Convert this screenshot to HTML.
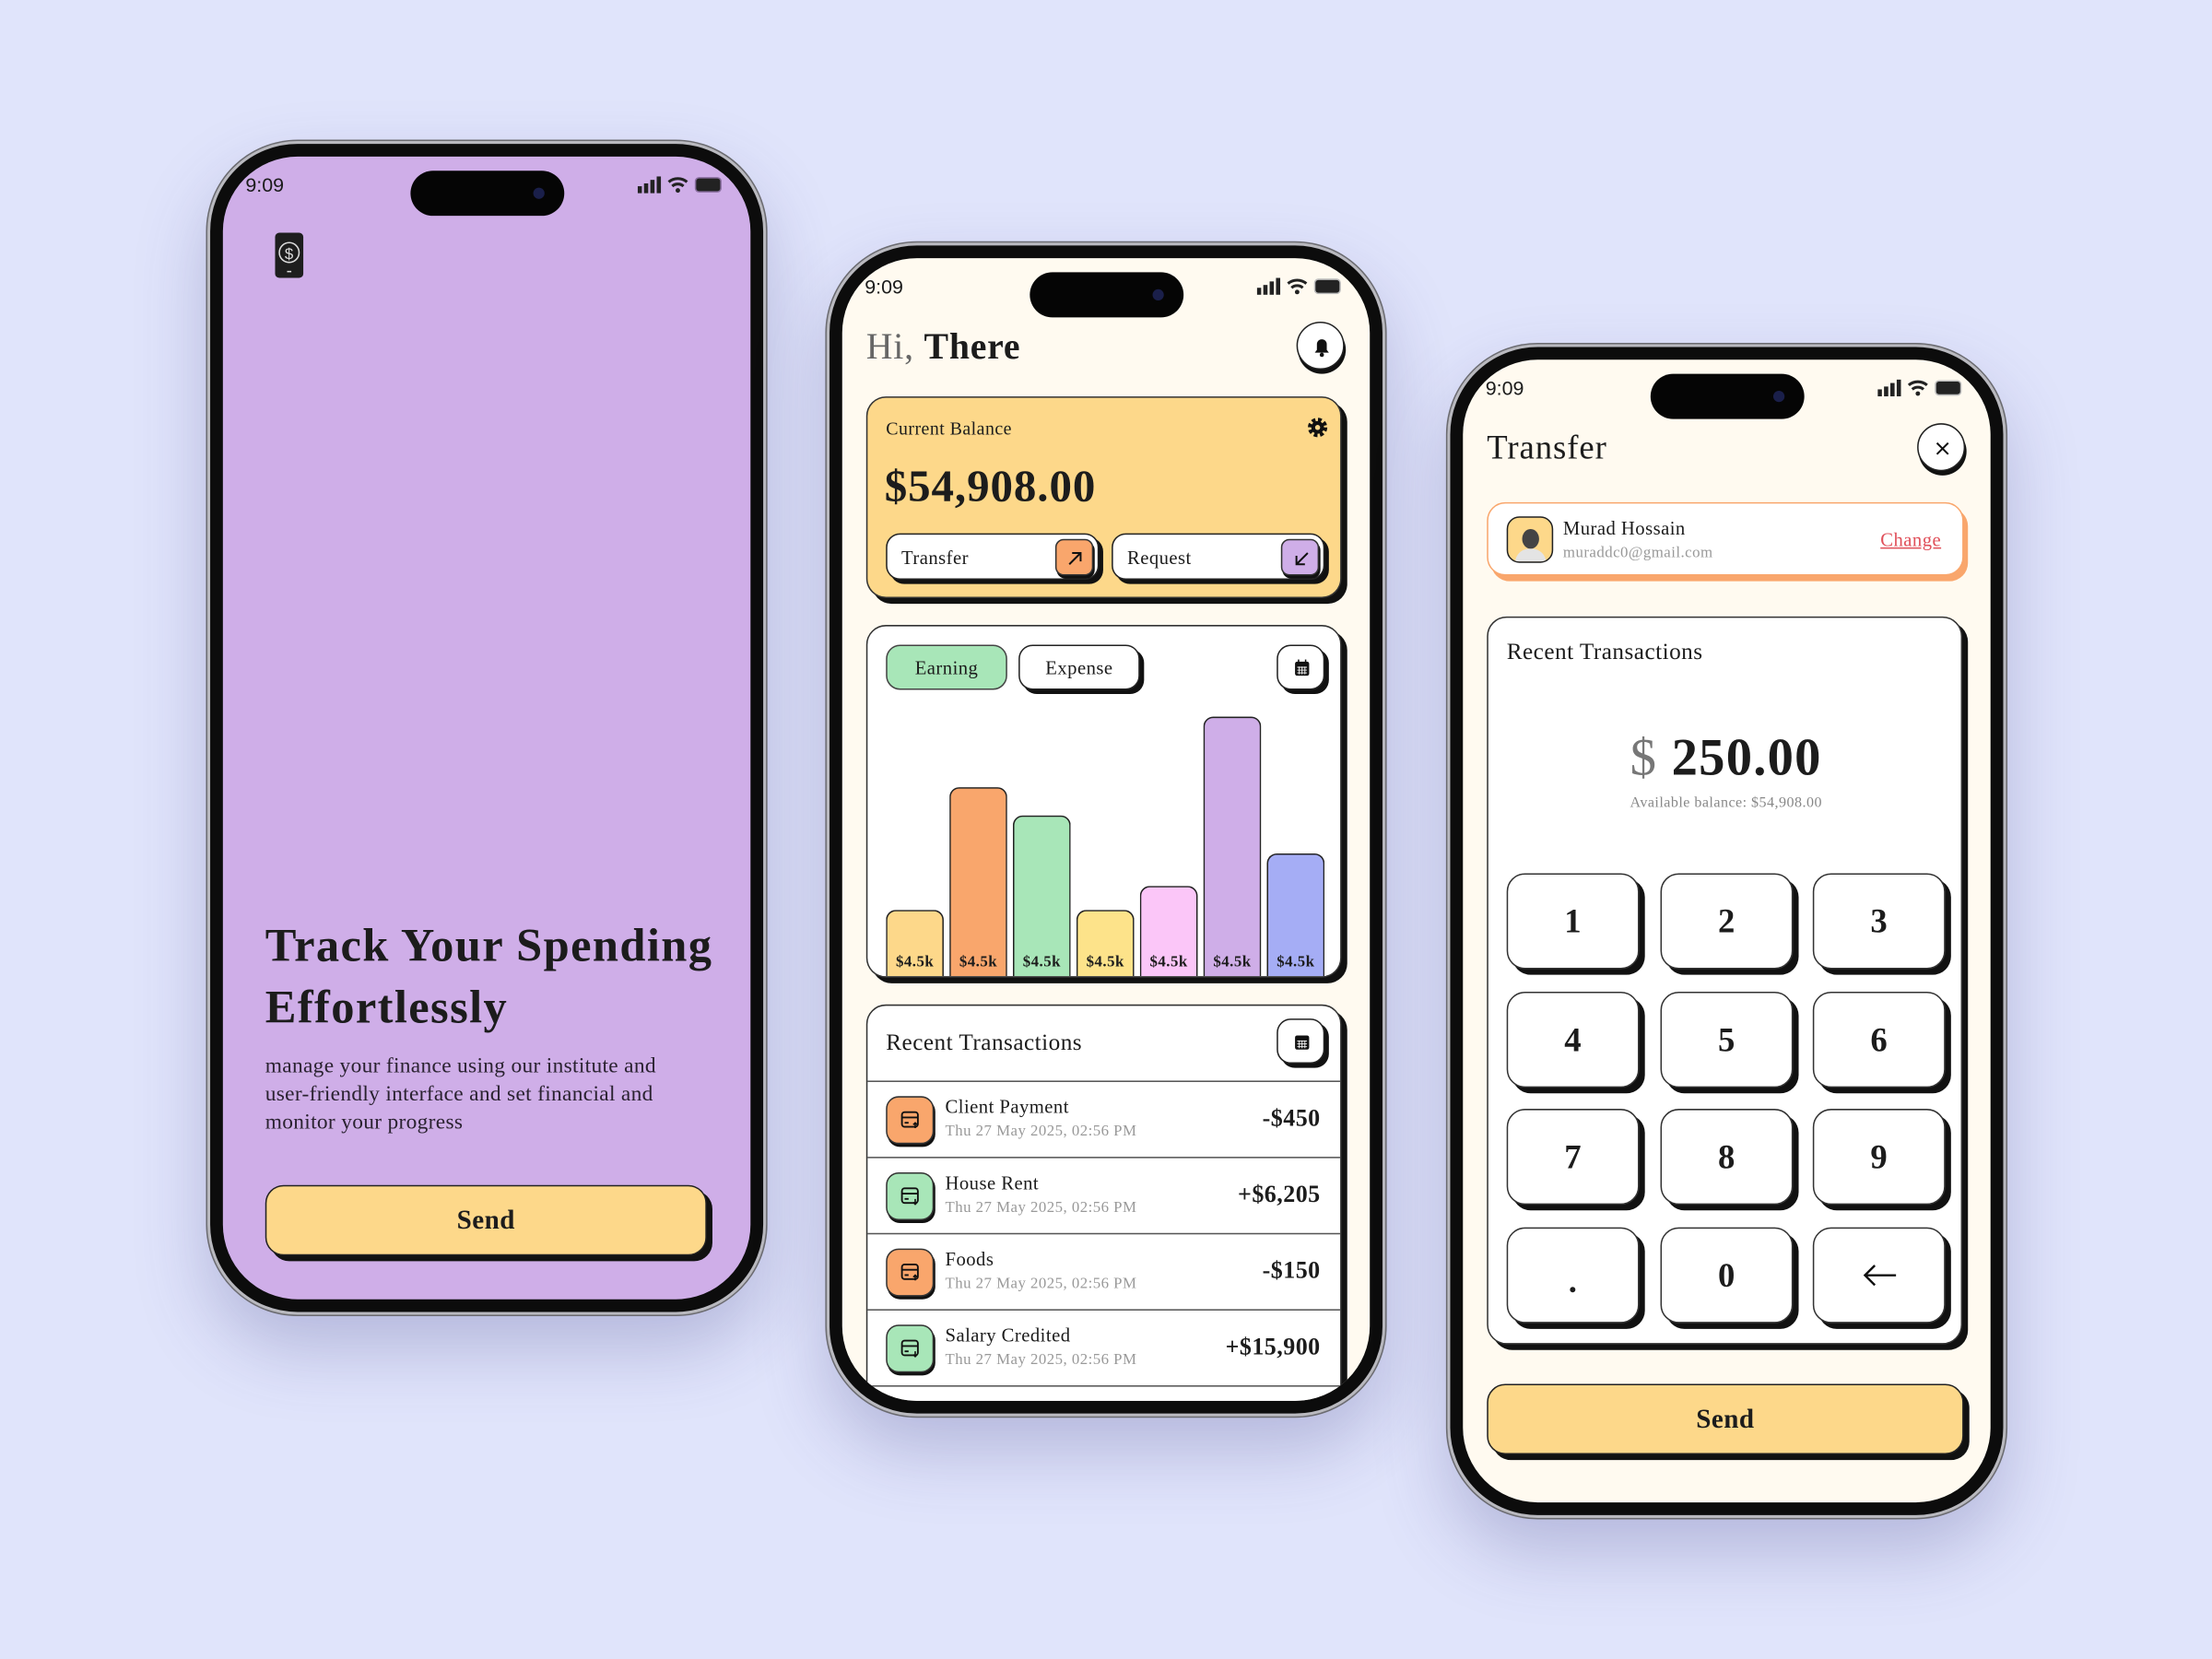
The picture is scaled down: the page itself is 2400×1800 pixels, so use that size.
<!DOCTYPE html>
<html><head><meta charset="utf-8"><style>
*{box-sizing:border-box;margin:0;padding:0}
html,body{width:2400px;height:1800px;overflow:hidden;background:#e0e4fb}
#w{position:absolute;left:0;top:0;width:1568px;height:1176px;transform:scale(1.530612);transform-origin:0 0;font-family:"Liberation Serif",serif;color:#1c1c1c;letter-spacing:.3px}
.ph{position:absolute;width:396px;height:832px;border-radius:64px;background:#0c0c0c;border:2px solid #b9b9bf;box-shadow:0 0 0 1px #6b6b70,0 24px 50px rgba(70,70,140,.28)}
.sc{position:absolute;left:9px;top:9px;width:374px;height:810px;border-radius:53px;overflow:hidden}
.a{position:absolute}
.time{position:absolute;left:16px;top:12px;font:500 14px "Liberation Sans",sans-serif;letter-spacing:0}
.isl{position:absolute;width:109px;height:32px;top:10px;left:133px;background:#050505;border-radius:16px}
.isl:after{content:"";position:absolute;right:14px;top:12px;width:8px;height:8px;border-radius:50%;background:#1a1f4a}
.st{position:absolute;right:18px;top:14px;width:62px;height:12px}
.sh{border:1px solid #222;box-shadow:3px 3px 0 #111}
.card{background:#fff;border:1px solid #333;border-radius:14px;box-shadow:4px 4px 0 #111}
.bar{position:absolute;bottom:0;width:41px;border:1.3px solid #222;border-bottom:none;border-radius:7px 7px 0 0;font-weight:bold;font-size:11px;text-align:center;padding-top:0}
.bar span{position:absolute;bottom:4px;left:0;right:0}
.row{position:absolute;left:0;right:0;height:54px;border-top:1px solid #555}
.ic{position:absolute;left:13px;top:10px;width:34px;height:34px;border-radius:9px;border:1px solid #333;box-shadow:1px 2px 0 #111}
.nm{position:absolute;left:55px;top:10px;font-size:13.5px}
.dt{position:absolute;left:55px;top:29px;font-size:11px;color:#999}
.amt{position:absolute;right:14px;top:16px;font-size:17px;font-weight:bold}
.key{position:absolute;width:94px;height:68px;background:#fff;border:1px solid #333;border-radius:13px;box-shadow:4px 4px 0 #111;font-size:24px;font-weight:bold;text-align:center;line-height:68px}
</style></head><body><div id="w">

<svg width="0" height="0" style="position:absolute"><defs>
<symbol id="cu" viewBox="0 0 34 34"><rect x="11" y="11" width="12" height="11" rx="2" fill="none" stroke="#111" stroke-width="1.3"/><path d="M11 15h12M13 19h3" stroke="#111" stroke-width="1.3"/><path d="M21 23v-4M19.5 20.5l1.5-1.5 1.5 1.5" stroke="#111" stroke-width="1.1" fill="none"/></symbol>
<symbol id="cd" viewBox="0 0 34 34"><rect x="11" y="11" width="12" height="11" rx="2" fill="none" stroke="#111" stroke-width="1.3"/><path d="M11 15h12M13 19h3" stroke="#111" stroke-width="1.3"/><path d="M21 19v4M19.5 21.5l1.5 1.5 1.5-1.5" stroke="#111" stroke-width="1.1" fill="none"/></symbol>
</defs></svg>

<!-- Phone 1 -->
<div class="ph" style="left:147px;top:100px">
<div class="sc" style="background:#cfaee8">
<div class="time">9:09</div><div class="isl"></div>
<svg class="st" viewBox="0 0 62 12"><rect x="0" y="7" width="3" height="5" fill="#222"/><rect x="4.5" y="5" width="3" height="7" fill="#222"/><rect x="9" y="2.5" width="3" height="9.5" fill="#222"/><rect x="13.5" y="0" width="3" height="12" fill="#222"/><path d="M22 4a10 10 0 0 1 13 0M24.5 7a6 6 0 0 1 8 0" stroke="#222" stroke-width="2" fill="none"/><circle cx="28.5" cy="10" r="1.6" fill="#222"/><rect x="41" y="1" width="18" height="10" rx="2.5" fill="#222" stroke="#8a6fa0"/></svg>
<div class="a" style="left:37px;top:54px;width:20px;height:32px;background:#1e1e1e;border-radius:3px"><svg width="20" height="32" viewBox="0 0 20 32"><circle cx="10" cy="14" r="7" stroke="#ddd" fill="none" stroke-width="1"/><text x="10" y="18.5" text-anchor="middle" font-size="11" fill="#ddd" font-family="Liberation Sans">$</text><rect x="8.5" y="27" width="3" height="1" fill="#ddd"/></svg></div>
<div class="a" style="left:30px;top:538px;font-size:33px;font-weight:bold;line-height:44px;width:340px;letter-spacing:.9px;white-space:nowrap">Track Your Spending<br>Effortlessly</div>
<div class="a" style="left:30px;top:635px;font-size:15.3px;line-height:20px;width:340px;color:#2a2230;letter-spacing:.2px;white-space:nowrap">manage your finance using our institute and<br>user-friendly interface and set financial and<br>monitor your progress</div>
<div class="a sh" style="left:30px;top:729px;width:313px;height:50px;border-radius:13px;background:#fdd88a;box-shadow:4px 4px 0 #111;text-align:center;line-height:50px;font-size:19px;font-weight:bold">Send</div>
</div></div>

<!-- Phone 2 -->
<div class="ph" style="left:586px;top:172px">
<div class="sc" style="background:#fffaf0">
<div class="time">9:09</div><div class="isl"></div>
<svg class="st" viewBox="0 0 62 12"><rect x="0" y="7" width="3" height="5" fill="#222"/><rect x="4.5" y="5" width="3" height="7" fill="#222"/><rect x="9" y="2.5" width="3" height="9.5" fill="#222"/><rect x="13.5" y="0" width="3" height="12" fill="#222"/><path d="M22 4a10 10 0 0 1 13 0M24.5 7a6 6 0 0 1 8 0" stroke="#222" stroke-width="2" fill="none"/><circle cx="28.5" cy="10" r="1.6" fill="#222"/><rect x="41" y="1" width="18" height="10" rx="2.5" fill="#222" stroke="#bbb"/></svg>
<div class="a" style="left:17px;top:48px;font-size:26px;letter-spacing:.5px"><span style="color:#666">Hi,</span> <b style="font-weight:600">There</b></div>
<div class="a" style="left:322px;top:45px;width:34px;height:34px;border-radius:50%;background:#fff;border:1px solid #222;box-shadow:1px 3px 0 #111"><svg width="34" height="34" viewBox="0 0 34 34"><path d="M12 21h10l-1.5-2v-4a3.5 3.5 0 0 0-7 0v4z" fill="#111"/><circle cx="17" cy="22.5" r="1.5" fill="#111"/></svg></div>
<div class="a" style="left:17px;top:98px;width:337px;height:143px;background:#fdd88a;border:1px solid #333;border-radius:14px;box-shadow:4px 4px 0 #111">
 <div class="a" style="left:13px;top:14px;font-size:13px">Current Balance</div>
 <svg class="a" style="left:311px;top:13px" width="16" height="16" viewBox="0 0 16 16"><circle cx="8" cy="8" r="5.2" fill="none" stroke="#111" stroke-width="3.4" stroke-dasharray="2.4 1.7"/><circle cx="8" cy="8" r="4.5" fill="#111"/><circle cx="8" cy="8" r="1.8" fill="#fdd88a"/></svg>
 <div class="a" style="left:12px;top:44px;font-size:32px;font-weight:bold;letter-spacing:.6px">$54,908.00</div>
 <div class="a sh" style="left:13px;top:96px;width:151px;height:33px;background:#fff;border-radius:10px;font-size:13.5px;line-height:33px;padding-left:10px">Transfer<div class="a" style="right:3px;top:3px;width:27px;height:26px;background:#f9a66c;border:1px solid #333;border-radius:6px;box-shadow:1px 2px 0 #111"><svg width="27" height="26" viewBox="0 0 27 26"><path d="M9 17l8-8M11 9h6v6" stroke="#111" stroke-width="1.3" fill="none"/></svg></div></div>
 <div class="a sh" style="left:173px;top:96px;width:151px;height:33px;background:#fff;border-radius:10px;font-size:13.5px;line-height:33px;padding-left:10px">Request<div class="a" style="right:3px;top:3px;width:27px;height:26px;background:#cfaee8;border:1px solid #333;border-radius:6px;box-shadow:1px 2px 0 #111"><svg width="27" height="26" viewBox="0 0 27 26"><path d="M18 9l-8 8M10 11v6h6" stroke="#111" stroke-width="1.3" fill="none"/></svg></div></div>
</div>
<div class="a card" style="left:17px;top:260px;width:337px;height:250px">
 <div class="a" style="left:13px;top:13px;width:86px;height:32px;background:#a8e6b8;border:1px solid #444;border-radius:10px;text-align:center;line-height:31px;font-size:13.5px">Earning</div>
 <div class="a sh" style="left:107px;top:13px;width:86px;height:32px;background:#fff;border-radius:10px;text-align:center;line-height:31px;font-size:13.5px">Expense</div>
 <div class="a sh" style="left:290px;top:13px;width:34px;height:32px;background:#fff;border-radius:10px"><svg width="34" height="32" viewBox="0 0 34 32"><rect x="12" y="11" width="10" height="10" rx="1.5" fill="#111"/><rect x="14" y="9.5" width="1" height="2.5" fill="#111"/><rect x="19" y="9.5" width="1" height="2.5" fill="#111"/><path d="M13.5 15h7M13.5 17h7M13.5 19h7M15 14.5v5.5M17 14.5v5.5M19 14.5v5.5" stroke="#fff" stroke-width=".6"/></svg></div>
 <div class="a" style="left:0;top:0;width:337px;height:248px;overflow:hidden">
  <div class="bar" style="left:13px;height:47px;background:#fdd88a"><span>$4.5k</span></div>
  <div class="bar" style="left:58px;height:134px;background:#f9a66c"><span>$4.5k</span></div>
  <div class="bar" style="left:103px;height:114px;background:#a8e6b8"><span>$4.5k</span></div>
  <div class="bar" style="left:148px;height:47px;background:#fde38a"><span>$4.5k</span></div>
  <div class="bar" style="left:193px;height:64px;background:#fbc6f8"><span>$4.5k</span></div>
  <div class="bar" style="left:238px;height:184px;background:#cfaee8"><span>$4.5k</span></div>
  <div class="bar" style="left:283px;height:87px;background:#a5adf5"><span>$4.5k</span></div>
 </div>
</div>
<div class="a card" style="left:17px;top:529px;width:337px;height:300px;border-radius:14px">
 <div class="a" style="left:13px;top:16px;font-size:16.5px">Recent Transactions</div>
 <div class="a sh" style="left:290px;top:9px;width:34px;height:32px;background:#fff;border-radius:10px"><svg width="34" height="32" viewBox="0 0 34 32"><rect x="12" y="11" width="10" height="10" rx="1.5" fill="#111"/><path d="M13.5 15h7M13.5 17h7M13.5 19h7M15 14.5v5.5M17 14.5v5.5M19 14.5v5.5" stroke="#fff" stroke-width=".6"/></svg></div>
 <div class="row" style="top:53px"><div class="ic" style="background:#f9a66c"><svg width="32" height="32" viewBox="0 0 34 34"><use href="#cu"/></svg></div><div class="nm">Client Payment</div><div class="dt">Thu 27 May 2025, 02:56 PM</div><div class="amt">-$450</div></div>
 <div class="row" style="top:107px"><div class="ic" style="background:#a8e6b8"><svg width="32" height="32" viewBox="0 0 34 34"><use href="#cd"/></svg></div><div class="nm">House Rent</div><div class="dt">Thu 27 May 2025, 02:56 PM</div><div class="amt">+$6,205</div></div>
 <div class="row" style="top:161px"><div class="ic" style="background:#f9a66c"><svg width="32" height="32" viewBox="0 0 34 34"><use href="#cu"/></svg></div><div class="nm">Foods</div><div class="dt">Thu 27 May 2025, 02:56 PM</div><div class="amt">-$150</div></div>
 <div class="row" style="top:215px"><div class="ic" style="background:#a8e6b8"><svg width="32" height="32" viewBox="0 0 34 34"><use href="#cd"/></svg></div><div class="nm">Salary Credited</div><div class="dt">Thu 27 May 2025, 02:56 PM</div><div class="amt">+$15,900</div></div>
 <div class="row" style="top:269px"></div>
</div>
</div></div>

<!-- Phone 3 -->
<div class="ph" style="left:1026px;top:244px">
<div class="sc" style="background:#fffaf0">
<div class="time">9:09</div><div class="isl"></div>
<svg class="st" viewBox="0 0 62 12"><rect x="0" y="7" width="3" height="5" fill="#222"/><rect x="4.5" y="5" width="3" height="7" fill="#222"/><rect x="9" y="2.5" width="3" height="9.5" fill="#222"/><rect x="13.5" y="0" width="3" height="12" fill="#222"/><path d="M22 4a10 10 0 0 1 13 0M24.5 7a6 6 0 0 1 8 0" stroke="#222" stroke-width="2" fill="none"/><circle cx="28.5" cy="10" r="1.6" fill="#222"/><rect x="41" y="1" width="18" height="10" rx="2.5" fill="#222" stroke="#bbb"/></svg>
<div class="a" style="left:17px;top:50px;font-size:24px;letter-spacing:.6px">Transfer</div>
<div class="a" style="left:322px;top:45px;width:34px;height:34px;border-radius:50%;background:#fff;border:1px solid #222;box-shadow:1px 3px 0 #111"><svg width="34" height="34" viewBox="0 0 34 34"><path d="M13 13l8 8M21 13l-8 8" stroke="#111" stroke-width="1.3"/></svg></div>
<div class="a" style="left:17px;top:101px;width:338px;height:52px;background:#fff;border:1px solid #f9a66c;border-radius:13px;box-shadow:3px 4px 0 #f9a66c">
 <div class="a" style="left:13px;top:9px;width:33px;height:33px;background:#fdd88a;border:1px solid #222;border-radius:9px;overflow:hidden"><div class="a" style="left:10px;top:8px;width:12px;height:14px;border-radius:50%;background:#444"></div><div class="a" style="left:5px;top:22px;width:22px;height:14px;border-radius:10px 10px 0 0;background:#e4e4e4"></div></div>
 <div class="a" style="left:53px;top:10px;font-size:13.5px">Murad Hossain</div>
 <div class="a" style="left:53px;top:29px;font-size:11px;color:#999">muraddc0@gmail.com</div>
 <div class="a" style="right:15px;top:18px;font-size:13.5px;color:#e0505a;text-decoration:underline">Change</div>
</div>
<div class="a card" style="left:17px;top:182px;width:337px;height:516px">
 <div class="a" style="left:13px;top:14px;font-size:16.5px">Recent Transactions</div>
 <div class="a" style="left:0;width:337px;top:78px;text-align:center;font-size:37px;font-weight:bold;letter-spacing:.8px"><span style="color:#777;font-weight:normal">$</span> 250.00</div>
 <div class="a" style="left:0;width:337px;top:126px;text-align:center;font-size:10.5px;color:#888">Available balance: $54,908.00</div>
 <div class="key" style="left:13px;top:181px">1</div><div class="key" style="left:122px;top:181px">2</div><div class="key" style="left:230px;top:181px">3</div>
 <div class="key" style="left:13px;top:265px">4</div><div class="key" style="left:122px;top:265px">5</div><div class="key" style="left:230px;top:265px">6</div>
 <div class="key" style="left:13px;top:348px">7</div><div class="key" style="left:122px;top:348px">8</div><div class="key" style="left:230px;top:348px">9</div>
 <div class="key" style="left:13px;top:432px;line-height:76px">.</div><div class="key" style="left:122px;top:432px">0</div><div class="key" style="left:230px;top:432px"><svg width="94" height="66" viewBox="0 0 94 66"><path d="M36 33h22M43 26l-7 7 7 7" stroke="#111" stroke-width="1.6" fill="none"/></svg></div>
</div>
<div class="a sh" style="left:17px;top:726px;width:338px;height:50px;border-radius:13px;background:#fdd88a;box-shadow:4px 4px 0 #111;text-align:center;line-height:50px;font-size:19px;font-weight:bold">Send</div>
</div></div>

</div></body></html>
